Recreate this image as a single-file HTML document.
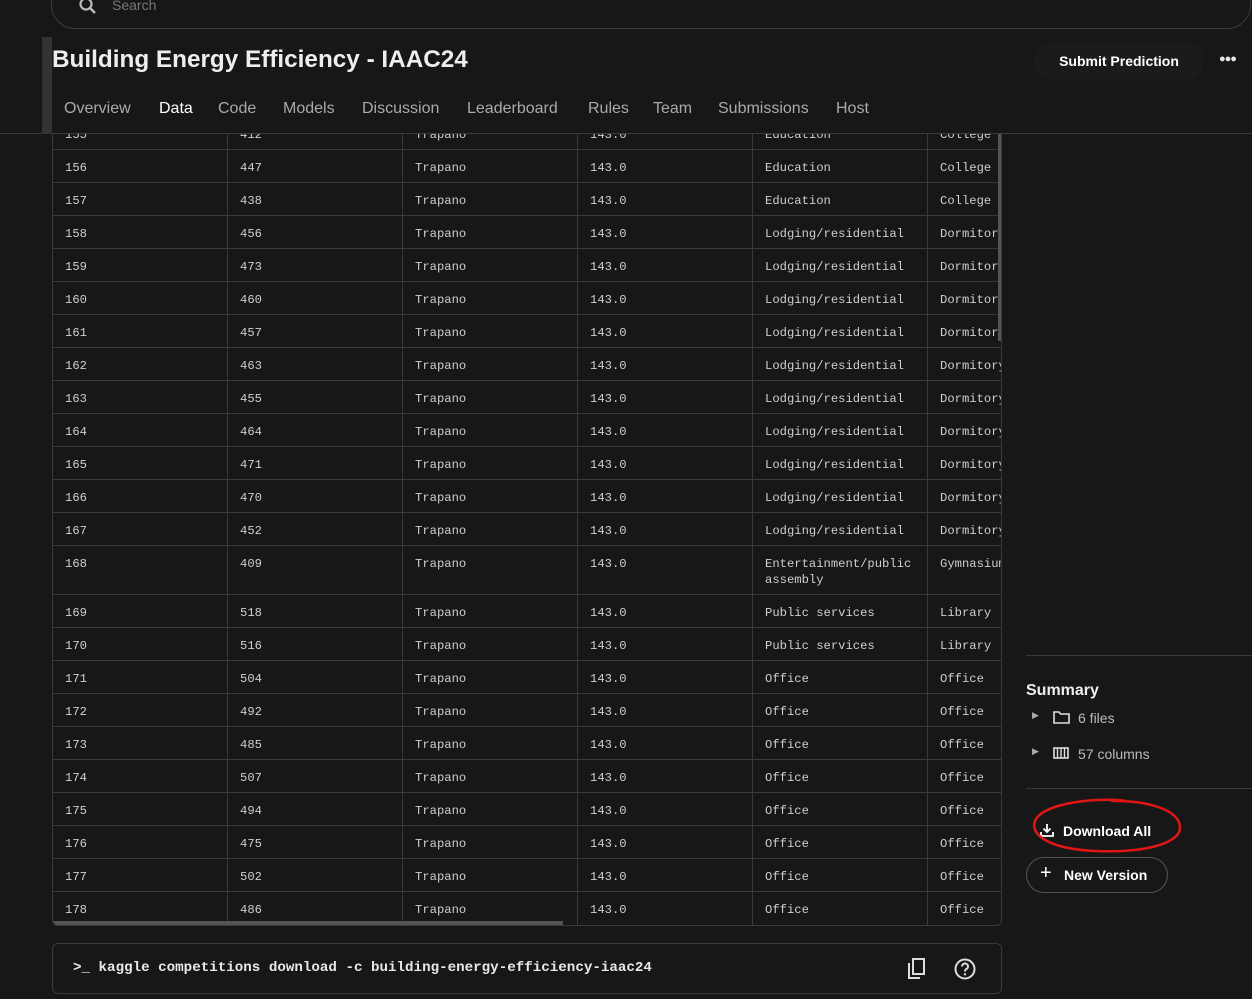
<!DOCTYPE html>
<html><head><meta charset="utf-8"><style>
*{box-sizing:border-box;margin:0;padding:0}
body{width:1252px;height:999px;background:#171717;overflow:hidden;position:relative;font-family:"Liberation Sans",sans-serif;color:#e8e8e8}
.search{position:absolute;left:51px;top:-20px;width:1200px;height:49px;border:1px solid #3c3c3c;border-radius:24px}
.search span{position:absolute;left:60px;top:16px;color:#777;font-size:14px}
.hdr{position:absolute;left:0;top:0;width:1252px;height:134px;border-bottom:1px solid #3a3a3a;background:#171717;z-index:5}
.bar{position:absolute;left:42px;top:37px;width:10px;height:97px;background:#333}
h1{position:absolute;left:52px;top:46px;font-size:24.3px;font-weight:bold;color:#eee;letter-spacing:0px}
.tabs span{position:absolute;top:100px;font-size:16px;color:#aaa}
.sub{position:absolute;left:1034px;top:43px;width:170px;height:37px;border-radius:19px;background:#1b1b1b;font-size:14px;font-weight:bold;text-align:center;line-height:37px;color:#fff}
.dots{position:absolute;left:1219px;top:53px;font-size:11px;font-weight:bold;letter-spacing:-1px}
.tbl{position:absolute;left:52px;top:100px;width:950px;height:826px;border:1px solid #3a3a3a;border-radius:0 0 6px 6px;overflow:hidden}
.r{position:absolute;left:0;width:950px;border-bottom:1px solid #3a3a3a}
.c{position:absolute;top:0;bottom:0;width:175px;border-right:1px solid #3a3a3a;padding:10px 0 0 12px;font-family:"Liberation Mono",monospace;font-size:12.2px;color:#cfcfcf;line-height:16px;white-space:nowrap}
.vs{position:absolute;left:945px;top:33px;width:4px;height:207px;background:#555}
.hs{position:absolute;left:0;bottom:0;width:510px;height:4px;background:#555}
.cmd{position:absolute;left:52px;top:943px;width:950px;height:51px;border:1px solid #3a3a3a;border-radius:6px}
.cmd span{position:absolute;left:20px;top:16px;font-family:"Liberation Mono",monospace;font-size:14.2px;font-weight:bold;color:#e8e8e8}
.line{position:absolute;left:1026px;width:226px;height:1px;background:#3a3a3a}
.side{position:absolute;font-size:14px;color:#bbb}
</style></head><body>
<div class="tbl">
<div class="r" style="top:16px;height:33px"><div class="c" style="left:0">155</div><div class="c" style="left:175px">412</div><div class="c" style="left:350px">Trapano</div><div class="c" style="left:525px">143.0</div><div class="c" style="left:700px">Education</div><div class="c" style="left:875px">College</div></div>
<div class="r" style="top:49px;height:33px"><div class="c" style="left:0">156</div><div class="c" style="left:175px">447</div><div class="c" style="left:350px">Trapano</div><div class="c" style="left:525px">143.0</div><div class="c" style="left:700px">Education</div><div class="c" style="left:875px">College</div></div>
<div class="r" style="top:82px;height:33px"><div class="c" style="left:0">157</div><div class="c" style="left:175px">438</div><div class="c" style="left:350px">Trapano</div><div class="c" style="left:525px">143.0</div><div class="c" style="left:700px">Education</div><div class="c" style="left:875px">College</div></div>
<div class="r" style="top:115px;height:33px"><div class="c" style="left:0">158</div><div class="c" style="left:175px">456</div><div class="c" style="left:350px">Trapano</div><div class="c" style="left:525px">143.0</div><div class="c" style="left:700px">Lodging/residential</div><div class="c" style="left:875px">Dormitory</div></div>
<div class="r" style="top:148px;height:33px"><div class="c" style="left:0">159</div><div class="c" style="left:175px">473</div><div class="c" style="left:350px">Trapano</div><div class="c" style="left:525px">143.0</div><div class="c" style="left:700px">Lodging/residential</div><div class="c" style="left:875px">Dormitory</div></div>
<div class="r" style="top:181px;height:33px"><div class="c" style="left:0">160</div><div class="c" style="left:175px">460</div><div class="c" style="left:350px">Trapano</div><div class="c" style="left:525px">143.0</div><div class="c" style="left:700px">Lodging/residential</div><div class="c" style="left:875px">Dormitory</div></div>
<div class="r" style="top:214px;height:33px"><div class="c" style="left:0">161</div><div class="c" style="left:175px">457</div><div class="c" style="left:350px">Trapano</div><div class="c" style="left:525px">143.0</div><div class="c" style="left:700px">Lodging/residential</div><div class="c" style="left:875px">Dormitory</div></div>
<div class="r" style="top:247px;height:33px"><div class="c" style="left:0">162</div><div class="c" style="left:175px">463</div><div class="c" style="left:350px">Trapano</div><div class="c" style="left:525px">143.0</div><div class="c" style="left:700px">Lodging/residential</div><div class="c" style="left:875px">Dormitory</div></div>
<div class="r" style="top:280px;height:33px"><div class="c" style="left:0">163</div><div class="c" style="left:175px">455</div><div class="c" style="left:350px">Trapano</div><div class="c" style="left:525px">143.0</div><div class="c" style="left:700px">Lodging/residential</div><div class="c" style="left:875px">Dormitory</div></div>
<div class="r" style="top:313px;height:33px"><div class="c" style="left:0">164</div><div class="c" style="left:175px">464</div><div class="c" style="left:350px">Trapano</div><div class="c" style="left:525px">143.0</div><div class="c" style="left:700px">Lodging/residential</div><div class="c" style="left:875px">Dormitory</div></div>
<div class="r" style="top:346px;height:33px"><div class="c" style="left:0">165</div><div class="c" style="left:175px">471</div><div class="c" style="left:350px">Trapano</div><div class="c" style="left:525px">143.0</div><div class="c" style="left:700px">Lodging/residential</div><div class="c" style="left:875px">Dormitory</div></div>
<div class="r" style="top:379px;height:33px"><div class="c" style="left:0">166</div><div class="c" style="left:175px">470</div><div class="c" style="left:350px">Trapano</div><div class="c" style="left:525px">143.0</div><div class="c" style="left:700px">Lodging/residential</div><div class="c" style="left:875px">Dormitory</div></div>
<div class="r" style="top:412px;height:33px"><div class="c" style="left:0">167</div><div class="c" style="left:175px">452</div><div class="c" style="left:350px">Trapano</div><div class="c" style="left:525px">143.0</div><div class="c" style="left:700px">Lodging/residential</div><div class="c" style="left:875px">Dormitory</div></div>
<div class="r" style="top:445px;height:49px"><div class="c" style="left:0">168</div><div class="c" style="left:175px">409</div><div class="c" style="left:350px">Trapano</div><div class="c" style="left:525px">143.0</div><div class="c" style="left:700px">Entertainment/public<br>assembly</div><div class="c" style="left:875px">Gymnasium</div></div>
<div class="r" style="top:494px;height:33px"><div class="c" style="left:0">169</div><div class="c" style="left:175px">518</div><div class="c" style="left:350px">Trapano</div><div class="c" style="left:525px">143.0</div><div class="c" style="left:700px">Public services</div><div class="c" style="left:875px">Library</div></div>
<div class="r" style="top:527px;height:33px"><div class="c" style="left:0">170</div><div class="c" style="left:175px">516</div><div class="c" style="left:350px">Trapano</div><div class="c" style="left:525px">143.0</div><div class="c" style="left:700px">Public services</div><div class="c" style="left:875px">Library</div></div>
<div class="r" style="top:560px;height:33px"><div class="c" style="left:0">171</div><div class="c" style="left:175px">504</div><div class="c" style="left:350px">Trapano</div><div class="c" style="left:525px">143.0</div><div class="c" style="left:700px">Office</div><div class="c" style="left:875px">Office</div></div>
<div class="r" style="top:593px;height:33px"><div class="c" style="left:0">172</div><div class="c" style="left:175px">492</div><div class="c" style="left:350px">Trapano</div><div class="c" style="left:525px">143.0</div><div class="c" style="left:700px">Office</div><div class="c" style="left:875px">Office</div></div>
<div class="r" style="top:626px;height:33px"><div class="c" style="left:0">173</div><div class="c" style="left:175px">485</div><div class="c" style="left:350px">Trapano</div><div class="c" style="left:525px">143.0</div><div class="c" style="left:700px">Office</div><div class="c" style="left:875px">Office</div></div>
<div class="r" style="top:659px;height:33px"><div class="c" style="left:0">174</div><div class="c" style="left:175px">507</div><div class="c" style="left:350px">Trapano</div><div class="c" style="left:525px">143.0</div><div class="c" style="left:700px">Office</div><div class="c" style="left:875px">Office</div></div>
<div class="r" style="top:692px;height:33px"><div class="c" style="left:0">175</div><div class="c" style="left:175px">494</div><div class="c" style="left:350px">Trapano</div><div class="c" style="left:525px">143.0</div><div class="c" style="left:700px">Office</div><div class="c" style="left:875px">Office</div></div>
<div class="r" style="top:725px;height:33px"><div class="c" style="left:0">176</div><div class="c" style="left:175px">475</div><div class="c" style="left:350px">Trapano</div><div class="c" style="left:525px">143.0</div><div class="c" style="left:700px">Office</div><div class="c" style="left:875px">Office</div></div>
<div class="r" style="top:758px;height:33px"><div class="c" style="left:0">177</div><div class="c" style="left:175px">502</div><div class="c" style="left:350px">Trapano</div><div class="c" style="left:525px">143.0</div><div class="c" style="left:700px">Office</div><div class="c" style="left:875px">Office</div></div>
<div class="r" style="top:791px;height:35px;border-bottom:none"><div class="c" style="left:0">178</div><div class="c" style="left:175px">486</div><div class="c" style="left:350px">Trapano</div><div class="c" style="left:525px">143.0</div><div class="c" style="left:700px">Office</div><div class="c" style="left:875px">Office</div></div>
<div class="vs"></div><div class="hs"></div>
</div>
<div class="hdr">
<div class="search"><svg style="position:absolute;left:26px;top:15px" width="20" height="20" viewBox="0 0 20 20"><circle cx="8" cy="8" r="5.5" fill="none" stroke="#bbb" stroke-width="2.2"/><path d="M12 12l5 5" stroke="#bbb" stroke-width="2.4"/></svg><span>Search</span></div>
<div class="bar"></div>
<h1>Building Energy Efficiency - IAAC24</h1>
<div class="tabs"><span style="left:64px">Overview</span><span style="left:159px;color:#fff">Data</span><span style="left:218px">Code</span><span style="left:283px">Models</span><span style="left:362px">Discussion</span><span style="left:467px">Leaderboard</span><span style="left:588px">Rules</span><span style="left:653px">Team</span><span style="left:718px">Submissions</span><span style="left:836px">Host</span></div>
<div class="sub">Submit Prediction</div>
<div class="dots">●●●</div>
</div>
<div class="cmd"><span>&gt;_ kaggle competitions download -c building-energy-efficiency-iaac24</span>
<svg style="position:absolute;left:852px;top:13px" width="24" height="24" viewBox="0 0 24 24"><path d="M4 6v15h11" fill="none" stroke="#ddd" stroke-width="2"/><rect x="8" y="2" width="11" height="15" fill="none" stroke="#ddd" stroke-width="2"/></svg>
<svg style="position:absolute;left:900px;top:13px" width="24" height="24" viewBox="0 0 24 24"><circle cx="12" cy="12" r="9.5" fill="none" stroke="#ddd" stroke-width="2"/><path d="M9 9.5a3 3 0 1 1 4 2.8c-1 .4-1 1-1 2.2" fill="none" stroke="#ddd" stroke-width="2"/><circle cx="12" cy="17.3" r="1.2" fill="#ddd"/></svg></div>
<div class="line" style="top:655px"></div>
<div class="side" style="left:1026px;top:682px;font-size:16px;font-weight:bold;color:#eee">Summary</div>
<div class="side" style="left:1032px;top:710px;font-size:9px;color:#aaa">▶</div>
<svg style="position:absolute;left:1053px;top:711px" width="17" height="13" viewBox="0 0 17 13"><path d="M1 1h5l1.5 2H16v9H1z" fill="none" stroke="#ddd" stroke-width="1.6"/></svg>
<div class="side" style="left:1078px;top:710px">6 files</div>
<div class="side" style="left:1032px;top:746px;font-size:9px;color:#aaa">▶</div>
<svg style="position:absolute;left:1053px;top:747px" width="16" height="12" viewBox="0 0 16 12"><rect x="1" y="1" width="14" height="10" fill="none" stroke="#ddd" stroke-width="1.6"/><path d="M4.5 1v10M8 1v10M11.5 1v10" stroke="#ddd" stroke-width="1.4"/></svg>
<div class="side" style="left:1078px;top:746px">57 columns</div>
<div class="line" style="top:788px"></div>
<svg style="position:absolute;left:1040px;top:823px" width="14" height="14" viewBox="0 0 14 14"><path d="M7 1v8M3.5 5.5L7 9l3.5-3.5M1 9v4h12V9" fill="none" stroke="#fff" stroke-width="1.8"/></svg>
<div class="side" style="left:1063px;top:823px;font-weight:bold;color:#fff">Download All</div>
<svg style="position:absolute;left:1026px;top:795px" width="160" height="66" viewBox="0 0 160 66"><path d="M100 6C70 2 20 8 10 24c-8 14 10 30 60 32 50 2 85-8 84-24C153 14 120 6 90 6 80 6 88 4 100 6" fill="none" stroke="#e01515" stroke-width="2.5"/></svg>
<div style="position:absolute;left:1026px;top:857px;width:142px;height:36px;border:1px solid #555;border-radius:18px"></div>
<div class="side" style="left:1040px;top:862px;font-size:20px;color:#fff">+</div>
<div class="side" style="left:1064px;top:867px;font-weight:bold;color:#fff">New Version</div>
</body></html>
